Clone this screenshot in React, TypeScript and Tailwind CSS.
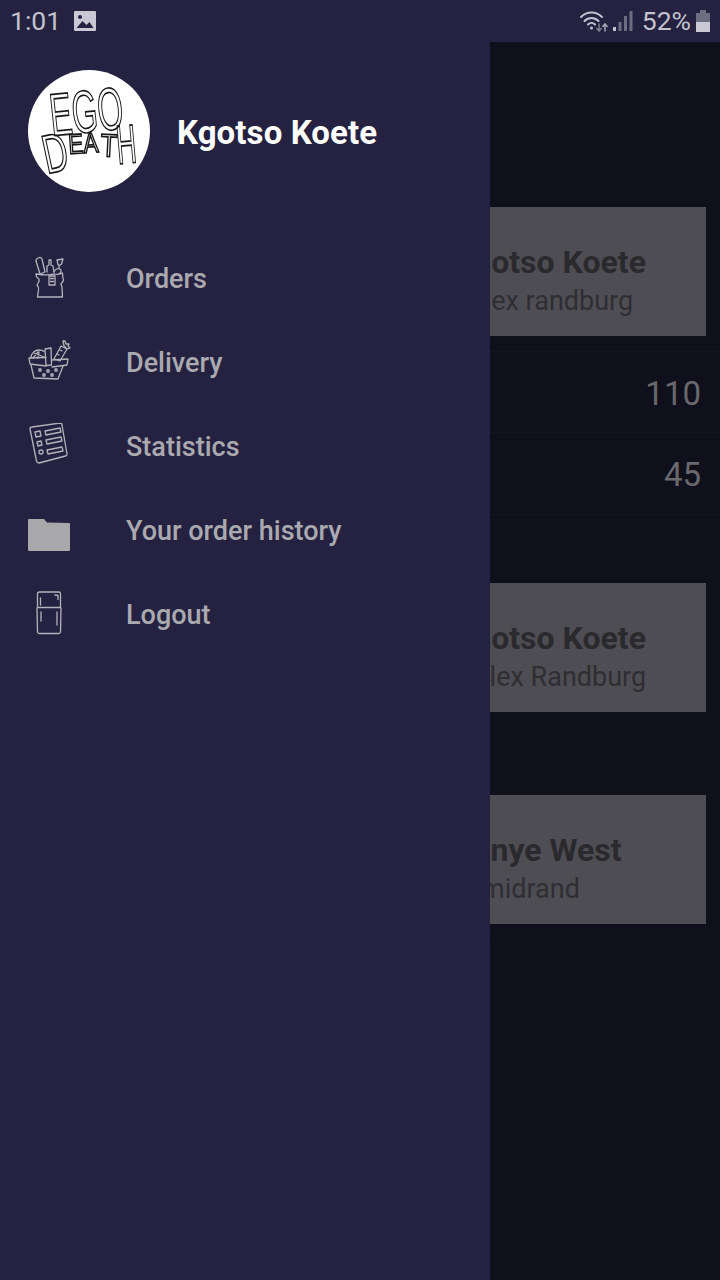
const menuStroke = '#b4b3bb'

function BagIcon() {
  return (
    <svg width="32" height="44" viewBox="0 0 32 44" fill="none" stroke={menuStroke} strokeWidth="1.3" strokeLinejoin="round" strokeLinecap="round" className="blur-[0.3px]">
      <path d="M2 6c0-3 5-5 6-2l3 13-5 2z" />
      <path d="M13 17v-6l2-1V5h2v5l2 1 1 6" />
      <path d="M23 5l6-1-1.500 5-2 1.500-1.500-1zM25 10.500v3" />
      <path d="M20 17c1-3 4-4 6-3s1 4-1 5" />
      <path d="M2 19c0 2 1 4 3 5 1 2-1 4-2 6 1 1 2 3 1.500 5l-1 7 25 0-.5-10c-.5-1-1-2-1-3 1-1 2-2 2.500-4-1-2-1-4-1-7-3 1-5 2-8 1-6 1.500-12 1-18 0z" />
      <path d="M15 21h6v9h-6z" />
      <path d="M16.500 23.500h3M16.500 26.500h3" />
    </svg>
  )
}

function BasketIcon() {
  return (
    <svg width="44" height="44" viewBox="0 0 44 44" fill="none" stroke={menuStroke} strokeWidth="1.3" strokeLinejoin="round" strokeLinecap="round" className="blur-[0.3px]">
      <path d="M3 19c0-5 4-8 8-8 2 0 4 .5 5 1.500" />
      <path d="M5 19l5-6M10 19l1-6M6 14l10 4" />
      <path d="M17 10l6-1 .5 17-5.500.5z" />
      <path d="M26 20l7-13 6 3-7 12z" />
      <path d="M35 2l1 5 3 3 3-1-2-2 1-2-3 0-1-3z" />
      <path d="M29 15l2 1M32 11l2 1" />
      <path d="M1 19l17-.5M24 21l16-1-1 6-15 2M1 19l1 6 16 2" />
      <path d="M3 26l3 13 24 1 5-13" />
      <path d="M11 30h2v2h-2zM19 31h2v2h-2zM27 30h2v2h-2zM15 35h2v2h-2zM23 35h2v2h-2z" />
    </svg>
  )
}

function ListIcon() {
  return (
    <svg width="42" height="44" viewBox="0 0 42 44" fill="none" stroke={menuStroke} strokeWidth="1.3" strokeLinejoin="round" strokeLinecap="round" className="blur-[0.3px]">
      <path d="M2 6c0-1 1-2 2-2L32 0c1 0 2 .5 2 2l5 29c0 1-.5 2-1.500 2L11 40c-1 0-2-.5-2.500-2z" />
      <path d="M7 9l5-1 1 5-5 1z" />
      <path d="M17 8l15-3 1 4-15 3z" />
      <path d="M9 19l4-1 1 4-4 1z" />
      <path d="M18 17l15-3 1 4-15 3z" />
      <path d="M11 29c0-1 1-2 2-2s2 .5 2 2-1 2-2 2-2-1-2-2z" />
      <path d="M19 27l15-3 1 4-15 3z" />
    </svg>
  )
}

function FolderIcon() {
  return (
    <svg width="42" height="32" viewBox="0 0 42 32" fill="#a8a7aa" className="mt-[12px]">
      <path d="M1 0h15l3 3.500 22 .5q1 0 1 1v26q0 1-1 1H1q-1 0-1-1V1q0-1 1-1z" />
    </svg>
  )
}

function FridgeIcon() {
  return (
    <svg width="26" height="44" viewBox="0 0 26 44" fill="none" stroke={menuStroke} strokeWidth="1.3" strokeLinejoin="round" strokeLinecap="round" className="blur-[0.3px]">
      <path d="M1.500 2.500c0-1 1-1.500 2-1.500h19c1 0 2 .5 2 1.500v14h-23z" />
      <path d="M1 17l.5 24c0 1 1 1.500 2 1.500h19c1 0 2-.5 2-1.500l.5-24" />
      <path d="M4.500 7v7M5 21v9M21 21v13M19 4l3 .5v4" />
    </svg>
  )
}

function Avatar() {
  return (
    <div className="w-[122px] h-[122px] rounded-full bg-white shrink-0 overflow-hidden">
      <svg width="122" height="122" viewBox="0 0 122 122" fill="none" stroke="#161616" strokeWidth="1.7" fontFamily="'Liberation Sans', sans-serif" className="opacity-[0.99] blur-[0.4px]">
        <text transform="translate(24 66) rotate(-6) scale(.55 1)" fontSize="60">EGO</text>
        <text transform="translate(19 104) rotate(-12) scale(.62 1)" fontSize="55">D</text>
        <text transform="translate(41 84) rotate(-4) scale(.8 1)" fontSize="28">EA</text>
        <text transform="translate(72 86) rotate(3) scale(.85 1)" fontSize="32">T</text>
        <text transform="translate(90 94) rotate(-5) scale(.5 1)" fontSize="55">H</text>
      </svg>
    </div>
  )
}

function StatusRight() {
  return (
    <div className="flex items-center">
      <svg width="30" height="24" viewBox="0 0 30 24" fill="none" stroke="#c3c2cf" strokeWidth="2" strokeLinecap="round" className="mr-[4px]">
        <path d="M2 8c6-6 15-6 21 0" />
        <path d="M5.500 12c4-4 10-4 14 0" />
        <path d="M9 15.500c2-2 5-2 7 0" />
        <circle cx="12.500" cy="19" r="1.500" fill="#c3c2cf" stroke="none" />
        <path d="M20 15v7M17.800 19.500l2.200 2.500 2.200-2.500" stroke="#7d7c8e" strokeWidth="1.500" />
        <path d="M26 22v-7M23.800 17.500l2.200-2.500 2.200 2.500" stroke="#a5a4b3" strokeWidth="1.500" />
      </svg>
      <svg width="20" height="22" viewBox="0 0 20 22" className="mr-[9px]">
        <rect x="0" y="17" width="3" height="4" fill="#c3c2cf" />
        <rect x="5.500" y="12" width="3" height="9" fill="#6d6c80" />
        <rect x="11" y="6" width="3" height="15" fill="#6d6c80" />
        <rect x="16.500" y="1" width="3" height="20" fill="#6d6c80" />
      </svg>
      <span className="text-[26.5px] leading-none text-[#c3c2cf]">52%</span>
      <div className="ml-[5px] mr-[10px] w-[14px] flex flex-col items-center">
        <div className="w-[6px] h-[3px] bg-[#6d6c80]" />
        <div className="w-[14px] h-[9px] bg-[#6d6c80]" />
        <div className="w-[14px] h-[10px] bg-[#c9c8d4]" />
      </div>
    </div>
  )
}

function StatusBar() {
  return (
    <div className="h-[42px] bg-[#242240] flex items-center justify-between pl-[10px] relative z-10">
      <div className="flex items-center">
        <span className="text-[26.5px] leading-none text-[#c3c2cf]">1:01</span>
        <svg width="22" height="20" viewBox="0 0 22 20" className="ml-[13px]">
          <rect width="22" height="20" rx="1" fill="#c9c8d4" />
          <path d="M2.500 17l6-7 4 4 3-3 4 6z" fill="#242240" />
          <circle cx="6" cy="6" r="2" fill="#242240" />
        </svg>
      </div>
      <StatusRight />
    </div>
  )
}

function CustomerCard({ name, address, className, addressClass }: { name: string; address: string; className: string; addressClass: string }) {
  return (
    <div className={`mx-[14px] h-[129px] bg-[#4e4d53] pl-[439px] pt-[36px] ${className}`}>
      <div className="text-[32px] leading-[38px] font-bold text-[#2a292d] whitespace-nowrap">{name}</div>
      <div className={`text-[27px] leading-[32px] mt-[4px] text-[#2f2e33] whitespace-nowrap ${addressClass}`}>{address}</div>
    </div>
  )
}

function CountRow({ value, className }: { value: string; className: string }) {
  return (
    <div className={`border-b border-[#15141f] flex items-center justify-end pr-[19px] pt-[3px] text-[33px] text-[#69686d] ${className}`}>
      {value}
    </div>
  )
}

const menuItems = [
  { label: 'Orders', icon: <BagIcon />, iconClass: 'pl-[6px]' },
  { label: 'Delivery', icon: <BasketIcon />, iconClass: '' },
  { label: 'Statistics', icon: <ListIcon />, iconClass: '' },
  { label: 'Your order history', icon: <FolderIcon />, iconClass: '' },
  { label: 'Logout', icon: <FridgeIcon />, iconClass: 'pl-[8px]' },
]

function Drawer() {
  return (
    <div className="absolute left-0 top-[42px] bottom-0 w-[490px] bg-[#242240]">
      <div className="flex items-center pl-[28px] pt-[28px]">
        <Avatar />
        <span className="ml-[27px] pt-[3px] text-[33px] leading-[40px] tracking-[0.1px] font-bold text-white whitespace-nowrap">Kgotso Koete</span>
      </div>
      <div className="mt-[43px]">
        {menuItems.map((item) => (
          <div key={item.label} className="h-[84px] flex items-center pl-[28px]">
            <div className={`w-[98px] flex items-center ${item.iconClass}`}>{item.icon}</div>
            <span className="pt-[4px] text-[27px] leading-[32px] font-medium text-[#aaa9af] whitespace-nowrap">{item.label}</span>
          </div>
        ))}
      </div>
    </div>
  )
}

export default function App() {
  return (
    <div className="relative w-[720px] h-[1280px] overflow-hidden bg-[#100f1c] font-[Roboto,sans-serif]">
      <StatusBar />
      <div className="pt-[165px]">
        <CustomerCard name="Kgotso Koete" address="Alex randburg" className="" addressClass="ml-[14px]" />
        <div className="mt-[15px] border-t border-[#15141f]">
          <CountRow value="110" className="h-[81px]" />
          <CountRow value="45" className="h-[82px]" />
        </div>
        <CustomerCard name="Kgotso Koete" address="Alex Randburg" className="mt-[68px]" addressClass="ml-[19px]" />
        <CustomerCard name="Kanye West" address="midrand" className="mt-[83px]" addressClass="ml-[28px]" />
        <div className="mt-[15px] border-t border-[#15141f]" />
      </div>
      <Drawer />
    </div>
  )
}
